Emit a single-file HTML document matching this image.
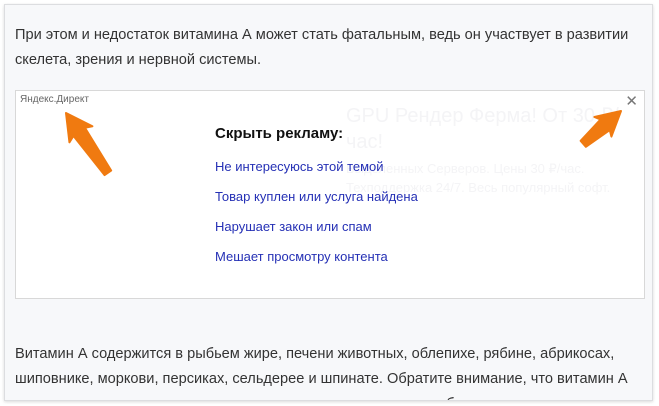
<!DOCTYPE html>
<html><head><meta charset="utf-8"><style>
html,body{margin:0;padding:0;width:659px;height:406px;overflow:hidden;background:#fff;font-family:"Liberation Sans",sans-serif;}
.card{position:absolute;left:4px;top:4px;width:647px;height:395px;background:#f7f8fa;border:1px solid #dcdde0;box-shadow:0 1px 3px rgba(0,0,0,.15);overflow:hidden;}
.p{position:absolute;left:10px;width:632px;font-size:14.6px;line-height:25px;color:#333;}
.ad{position:absolute;left:10px;top:85px;width:628px;height:207px;background:#fff;border:1px solid #d8d8d8;overflow:hidden;}
.lbl{position:absolute;left:4px;top:3px;font-size:10px;color:#666;}
.x{position:absolute;right:6px;top:1px;font-size:15px;color:#777;}
.h{position:absolute;left:199px;top:34px;font-size:15px;font-weight:bold;color:#111;}
.l{position:absolute;left:199px;font-size:13px;color:#2530b5;}
.faint{position:absolute;color:#f4f4f6;}
</style></head><body>
<div class="card">
<div class="p" style="top:18px">При этом и недостаток витамина А может стать фатальным, ведь он участвует в развитии скелета, зрения и нервной системы.</div>
<div class="ad">
<div class="faint" style="left:330px;top:12px;font-size:20px;line-height:26px;width:280px">GPU Рендер Ферма! От 30 ₽/час!</div>
<div class="faint" style="left:330px;top:68px;font-size:13px;line-height:19px;width:280px">Выделенных Серверов. Цены 30 ₽/час. Техподдержка 24/7. Весь популярный софт.</div>
<div class="lbl">Яндекс.Директ</div>
<div class="x">✕</div>
<div class="h">Скрыть рекламу:</div>
<div class="l" style="top:68px">Не интересуюсь этой темой</div>
<div class="l" style="top:98px">Товар куплен или услуга найдена</div>
<div class="l" style="top:128px">Нарушает закон или спам</div>
<div class="l" style="top:158px">Мешает просмотру контента</div>
<svg style="position:absolute;left:0;top:0" width="628" height="207">
<path transform="translate(50,22) rotate(-35)" d="M0 0 L14 26 L7 23 L4 73 L-4 73 L-7 23 L-14 26 Z" fill="#f07a10" stroke="#f07a10" stroke-linejoin="round" stroke-width="2"/>
<path transform="translate(605,20) rotate(49)" d="M0 0 L13 24 L7 21 L4 50 L-4 50 L-7 21 L-13 24 Z" fill="#f07a10" stroke="#f07a10" stroke-linejoin="round" stroke-width="2"/>
</svg>
</div>
<div class="p" style="top:337px">Витамин А содержится в рыбьем жире, печени животных, облепихе, рябине, абрикосах, шиповнике, моркови, персиках, сельдерее и шпинате. Обратите внимание, что витамин А относится к жирорастворимым, то есть, все его изделия употреблять все эти продукты</div>
</div>
</body></html>
